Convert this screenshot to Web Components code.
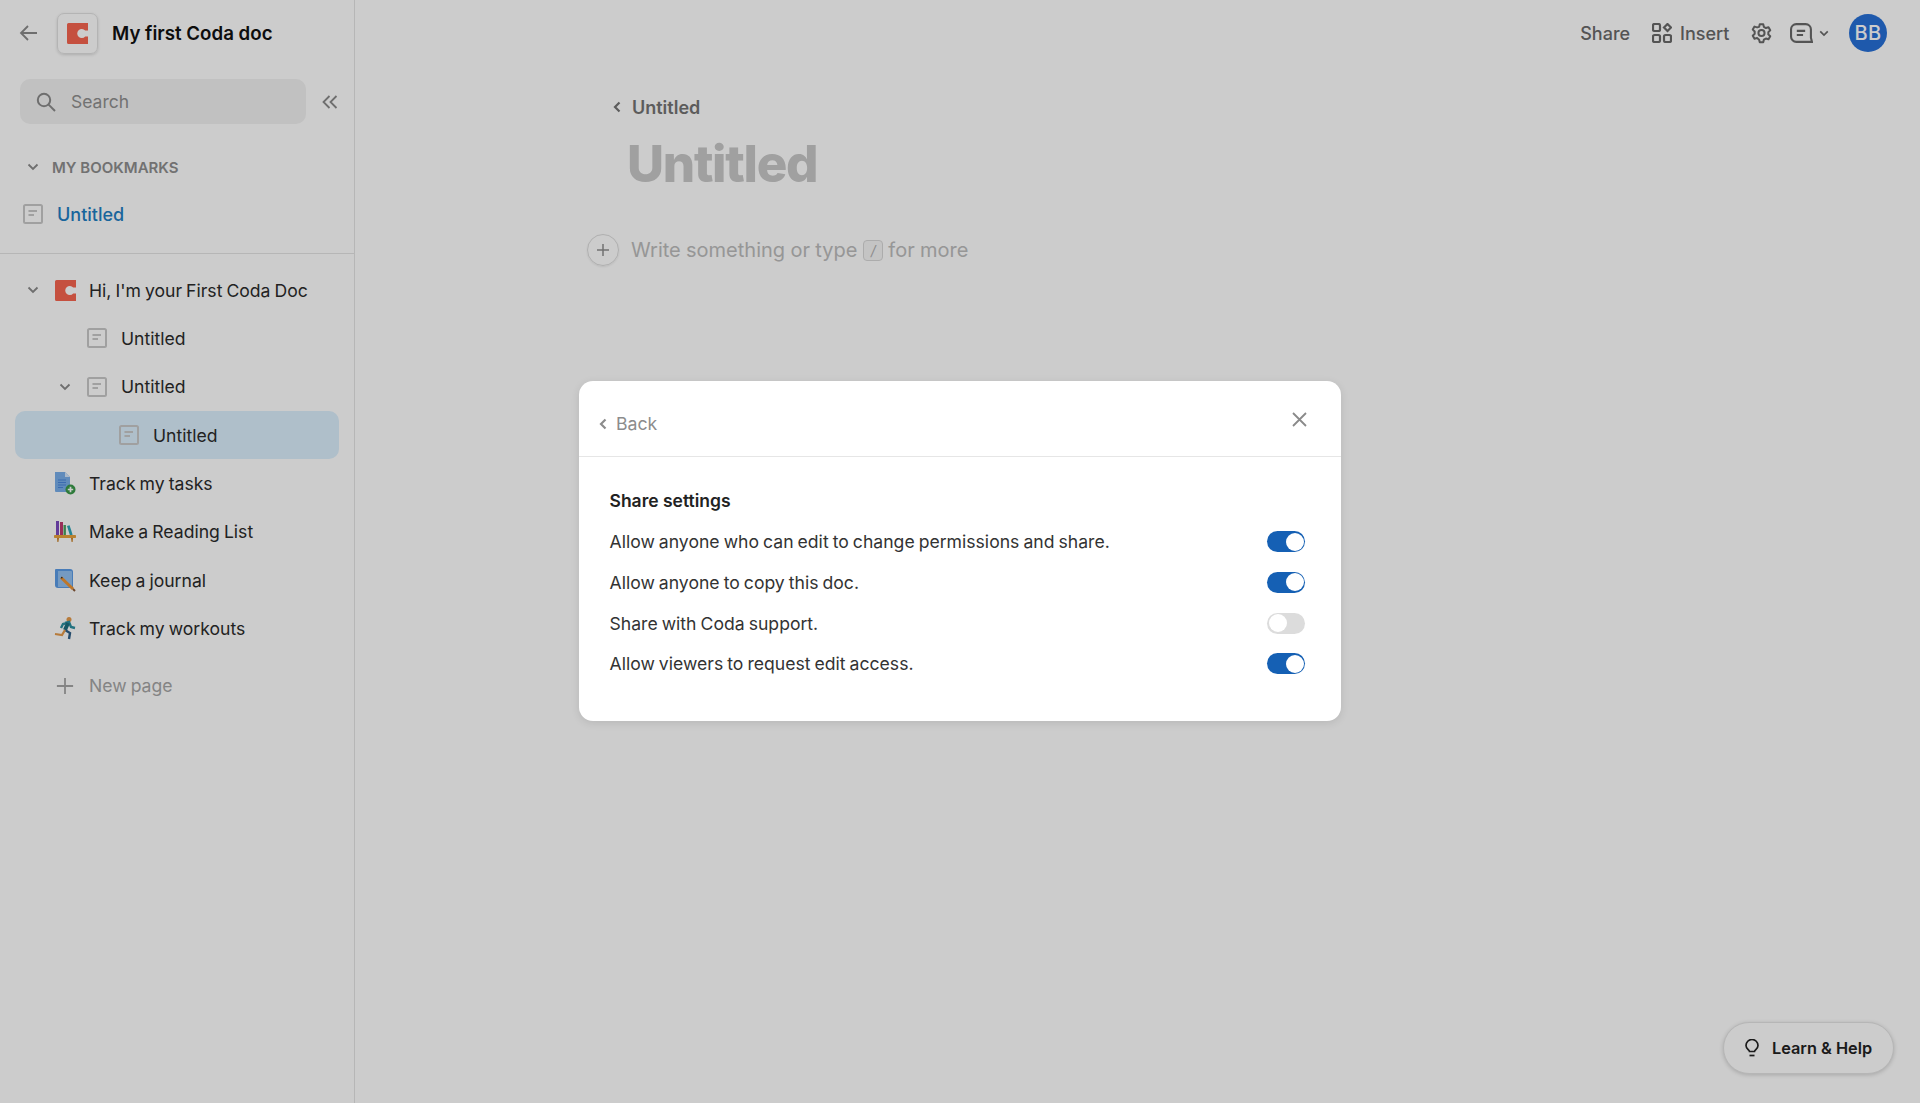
<!DOCTYPE html>
<html lang="en">
<head>
<meta charset="utf-8">
<title>My first Coda doc</title>
<style>
    html, body { margin: 0; height: 100%; }
    body { font-family: Inter, "Liberation Sans", sans-serif; color: #111; background: #fff; overflow: hidden; }
</style>
</head>
<body>
<coda-app>
    <doc-sidebar slot="sidebar" title-text="My first Coda doc">
        <side-heading slot="bookmarks">My bookmarks</side-heading>
        <tree-row slot="bookmarks" flat accent><doc-icon slot="icon" name="page"></doc-icon>Untitled</tree-row>
        <tree-row slot="tree" chevron><doc-icon slot="icon" name="coda" size="21"></doc-icon>Hi, I'm your First Coda Doc</tree-row>
        <tree-row slot="tree" level="1"><doc-icon slot="icon" name="page"></doc-icon>Untitled</tree-row>
        <tree-row slot="tree" level="1" chevron><doc-icon slot="icon" name="page"></doc-icon>Untitled</tree-row>
        <tree-row slot="tree" level="2" selected><doc-icon slot="icon" name="page"></doc-icon>Untitled</tree-row>
        <tree-row slot="tree"><doc-icon slot="icon" name="tasks" size="24"></doc-icon>Track my tasks</tree-row>
        <tree-row slot="tree"><doc-icon slot="icon" name="books" size="24"></doc-icon>Make a Reading List</tree-row>
        <tree-row slot="tree"><doc-icon slot="icon" name="journal" size="24"></doc-icon>Keep a journal</tree-row>
        <tree-row slot="tree"><doc-icon slot="icon" name="runner" size="24"></doc-icon>Track my workouts</tree-row>
        <tree-row slot="tree" muted spaced><doc-icon slot="icon" name="plus" size="18"></doc-icon>New page</tree-row>
    </doc-sidebar>
    <doc-topbar slot="main"></doc-topbar>
    <doc-page slot="main" crumb="Untitled" heading="Untitled"></doc-page>
    <help-button slot="float">Learn &amp; Help</help-button>
    <share-modal slot="modal" heading="Share settings">
        <setting-row on>Allow anyone who can edit to change permissions and share.</setting-row>
        <setting-row on>Allow anyone to copy this doc.</setting-row>
        <setting-row>Share with Coda support.</setting-row>
        <setting-row on>Allow viewers to request edit access.</setting-row>
    </share-modal>
</coda-app>

<script>
const CODA_PATH = 'M1.500 0H20v7.200h-2.700a4.300 4.300 0 1 0 0 5.600H20V20H1.500A1.500 1.500 0 0 1 0 18.500v-17A1.500 1.500 0 0 1 1.500 0z';
const ICONS = {
    page: `<rect x="1" y="1" width="18" height="18" rx="1.500" fill="none" stroke="#c8c8c8" stroke-width="2"/><path d="M5.500 7h8.500M5.500 11h5.500" stroke="#c8c8c8" stroke-width="1.800" fill="none"/>`,
    coda: `<path fill="#f7654f" d="${CODA_PATH}"/>`,
    plus: `<path d="M10 1v18M1 10h18" stroke="#a6a6a6" stroke-width="2" fill="none"/>`,
    tasks: `<path fill="#78aeea" d="M2 1h10l5 5v15H3a1 1 0 0 1-1-1z"/><path fill="#d6e7fa" d="M12 1l5 5h-5z"/><path d="M5 9h8M5 11.500h8M5 14h8M5 16.500h5" stroke="#4a86dc" stroke-width="1"/><circle cx="17.500" cy="18.500" r="5" fill="#3a9a4a"/><path d="M17.500 15.800v5.400M14.800 18.500h5.400" stroke="#fff" stroke-width="1.700"/>`,
    books: `<rect x="3" y="1" width="3" height="14" fill="#7b4ac0"/><rect x="7" y="2" width="3" height="13" fill="#c03a70"/><rect x="10.500" y="5" width="2.400" height="10" fill="#4aa060"/><path d="M14 6l2.600-.8 3 9.600-2.600.8z" fill="#2ea6b8"/><rect x="1" y="15" width="22" height="3" rx=".7" fill="#e8a23c"/><path d="M4 18h2l-.6 4H4.400zM18 18h2l-.4 4h-1z" fill="#c97f24"/>`,
    journal: `<path fill="#5b9ce6" d="M3 1h14a3 3 0 0 1 3 3v16H5a3 3 0 0 1-3-3V2a1 1 0 0 1 1-1z"/><path fill="#93c1f2" d="M5 3h13a1 1 0 0 1 1 1v15H5z"/><path d="M8 9.500l12 11.500" stroke="#ee9432" stroke-width="3"/><path d="M8 9.500l1.500.4" stroke="#333" stroke-width="1.500"/><path d="M20 21l2 2" stroke="#8a5a3a" stroke-width="2"/>`,
    runner: `<circle cx="16" cy="3.500" r="2.500" fill="#e59a4a"/><path d="M12 7l4-1 2 5 4 1M14 7l-4 1-2 4" stroke="#2c8fa0" stroke-width="2.400" fill="none"/><path d="M15 7l-3 7" stroke="#1c6f80" stroke-width="4"/><path d="M12 14l5 3-1 6" stroke="#2f5f88" stroke-width="2.400" fill="none"/><path d="M12 14l-3 5-7-1" stroke="#e59a4a" stroke-width="2.200" fill="none"/>`,
};

customElements.define('doc-icon', class DocIcon extends HTMLElement {
    connectedCallback() {
        const name = this.getAttribute('name');
        const size = this.getAttribute('size') || 20;
        const box = name === 'page' || name === 'coda' || name === 'plus' ? '0 0 20 20' : '0 0 24 24';
        this.attachShadow({ mode: 'open' }).innerHTML = `
            <style>:host { display: inline-flex; } svg { display: block; overflow: visible; }</style>
            <svg width="${size}" height="${size}" viewBox="${box}">${ICONS[name]}</svg>`;
    }
});

customElements.define('coda-app', class CodaApp extends HTMLElement {
    constructor() {
        super();
        this.attachShadow({ mode: 'open' }).innerHTML = `
            <style>
                :host { display: grid; grid-template-columns: 355px 1fr; height: 100vh; position: relative; overflow: hidden; }
                main { min-width: 0; display: flex; flex-direction: column; }
                .float { position: absolute; right: 26px; bottom: 29px; }
                .overlay { position: absolute; inset: 0; background: rgba(0, 0, 0, 0.2); display: flex; align-items: center; justify-content: center; padding-bottom: 1px; }
            </style>
            <slot name="sidebar"></slot>
            <main><slot name="main"></slot></main>
            <div class="float"><slot name="float"></slot></div>
            <div class="overlay"><slot name="modal"></slot></div>`;
    }
});

customElements.define('doc-sidebar', class DocSidebar extends HTMLElement {
    constructor() {
        super();
        this.attachShadow({ mode: 'open' }).innerHTML = `
            <style>
                :host { display: flex; flex-direction: column; border-right: 1px solid #e4e4e4; min-width: 0; }
                header { height: 66px; display: flex; align-items: center; padding-left: 19px; }
                .back { width: 20px; height: 20px; margin-right: 18px; }
                .logo { width: 41px; height: 41px; box-sizing: border-box; border: 1px solid #e2e2e2; border-radius: 7px; box-shadow: 0 1px 3px rgba(0,0,0,.15); display: flex; align-items: center; justify-content: center; margin-right: 14px; }
                h1 { margin: 1px 0 0; font-size: 18.700px; font-weight: 600; line-height: 24px; color: #111; }
                .search-row { display: flex; align-items: center; padding: 13px 0 0 20px; }
                .search { width: 286px; height: 45px; box-sizing: border-box; background: #f2f2f2; border-radius: 10px; display: flex; align-items: center; padding-left: 16px; font-size: 17.500px; color: #8f8f8f; }
                .search svg { margin-right: 15px; }
                .collapse { margin-left: 16px; }
                .bookmarks { padding: 22px 15px 15px; border-bottom: 1px solid #e4e4e4; }
                .tree { padding: 12px 15px 0; display: flex; flex-direction: column; }
                slot { display: block; }
            </style>
            <header>
                <svg class="back" viewBox="0 0 20 20" fill="none" stroke="#8a8a8a" stroke-width="1.800"><path d="M18 10H2M9 3l-7 7 7 7"/></svg>
                <div class="logo"><svg width="21" height="21" viewBox="0 0 20 20"><path fill="#f7654f" d="${CODA_PATH}"/></svg></div>
                <h1 id="t"></h1>
            </header>
            <div class="search-row">
                <div class="search">
                    <svg width="20" height="20" viewBox="0 0 20 20" fill="none" stroke="#8a8a8a" stroke-width="2"><circle cx="8" cy="8" r="6.200"/><path d="M12.600 12.600L19 19"/></svg>
                    <span>Search</span>
                </div>
                <svg class="collapse" width="16" height="14" viewBox="0 0 16 14" fill="none" stroke="#8a8a8a" stroke-width="1.800"><path d="M7.500 1L1.500 7l6 6M14.500 1l-6 6 6 6"/></svg>
            </div>
            <div class="bookmarks"><slot name="bookmarks"></slot></div>
            <div class="tree"><slot name="tree"></slot></div>`;
    }
    connectedCallback() {
        this.shadowRoot.getElementById('t').textContent = this.getAttribute('title-text');
    }
});

customElements.define('side-heading', class SideHeading extends HTMLElement {
    constructor() {
        super();
        this.attachShadow({ mode: 'open' }).innerHTML = `
            <style>
                :host { display: flex; align-items: center; height: 42px; padding-left: 12px; margin-bottom: 2px; font-size: 15px; font-weight: 600; color: #8e8e8e; text-transform: uppercase; }
                svg { margin-right: 13px; }
            </style>
            <svg width="12" height="8" viewBox="0 0 12 8" fill="none" stroke="#8a8a8a" stroke-width="1.800"><path d="M1.500 1.500L6 6l4.500-4.500"/></svg>
            <slot></slot>`;
    }
});

customElements.define('tree-row', class TreeRow extends HTMLElement {
    static #style = `
        :host { display: flex; align-items: center; height: 48.330px; border-radius: 10px; font-size: 17.600px; word-spacing: -0.900px; color: #2b2b2b; box-sizing: border-box; padding-left: calc(10px + 32px * var(--level, 0)); }
        :host([selected]) { background: #dbeffd; }
        :host([muted]) { color: #a6a6a6; }
        :host([spaced]) { margin-top: 9px; }
        :host([flat]) { padding-left: 8px; gap: 14px; }
        :host([accent]) { color: #1f7fc4; font-size: 18px; font-weight: 500; height: 48px; }
        .chev { width: 16px; display: flex; justify-content: center; margin-right: 12px; }
        :host([flat]) .chev { display: none; }
        .icon { width: 24px; display: flex; justify-content: center; margin-right: 12px; }
        :host([flat]) .icon { width: 20px; margin-right: 0; }
        .chev svg { visibility: hidden; }
        :host([chevron]) .chev svg { visibility: visible; }
    `
    constructor() {
        super();
        this.attachShadow({ mode: 'open' }).innerHTML = `
            <style>${TreeRow.#style}</style>
            <span class="chev"><svg width="12" height="8" viewBox="0 0 12 8" fill="none" stroke="#8a8a8a" stroke-width="1.800"><path d="M1.500 1.500L6 6l4.500-4.500"/></svg></span>
            <span class="icon"><slot name="icon"></slot></span>
            <slot></slot>`;
    }
    connectedCallback() {
        this.style.setProperty('--level', this.getAttribute('level') || 0);
    }
});

customElements.define('doc-topbar', class DocTopbar extends HTMLElement {
    constructor() {
        super();
        this.attachShadow({ mode: 'open' }).innerHTML = `
            <style>
                :host { display: flex; justify-content: flex-end; align-items: center; height: 66px; padding-right: 33px; flex: none; font-size: 18px; font-weight: 500; color: #6a6a6a; }
                .share { margin-right: 22px; }
                .insert { display: flex; align-items: center; gap: 8px; margin-right: 21px; }
                .gear { margin-right: 18px; }
                .chev { margin: 0 20px 0 6.500px; }
                .avatar { width: 38px; height: 38px; border-radius: 50%; background: #2670d8; color: #fff; display: flex; align-items: center; justify-content: center; font-size: 20px; font-weight: 500; letter-spacing: .3px; }
            </style>
            <span class="share">Share</span>
            <span class="insert">
                <svg width="20" height="20" viewBox="0 0 20 20" fill="none" stroke="#6a6a6a" stroke-width="2.200"><rect x="1" y="1" width="7" height="7" rx="1.500"/><rect x="1" y="12" width="7" height="7" rx="1.500"/><rect x="12" y="12" width="7" height="7" rx="1.500"/><path d="M15.500 1l3.500 3.500-3.500 3.500-3.500-3.500z"/></svg>
                Insert
            </span>
            <svg class="gear" width="21" height="22" viewBox="0 0 24 24" fill="none" stroke="#6a6a6a" stroke-width="2.300" stroke-linejoin="round"><circle cx="12" cy="12" r="3.500"/><path d="M10 2h4l.7 3 2.300 1.300 3-.9 2 3.400-2.200 2.200v2.600l2.200 2.200-2 3.400-3-.9-2.300 1.300-.7 3h-4l-.7-3L7 17.600l-3 .9-2-3.400 2.200-2.200v-2.600L2 8.100l2-3.400 3 .9L9.300 5z"/></svg>
            <svg width="23" height="21" viewBox="0 0 22 20" fill="none" stroke="#6a6a6a" stroke-width="2"><path d="M6 1h9a5 5 0 0 1 5 5v8l1 4h-15a5 5 0 0 1-5-5V6a5 5 0 0 1 5-5z"/><path d="M6.500 7.500h8M6.500 11.500h6"/></svg>
            <svg class="chev" width="10" height="7" viewBox="0 0 12 8" fill="none" stroke="#6a6a6a" stroke-width="2"><path d="M1.500 1.500L6 6l4.500-4.500"/></svg>
            <span class="avatar">BB</span>`;
    }
});

customElements.define('doc-page', class DocPage extends HTMLElement {
    constructor() {
        super();
        this.attachShadow({ mode: 'open' }).innerHTML = `
            <style>
                :host { display: flex; flex-direction: column; align-items: flex-start; padding: 29px 0 0 232px; }
                .crumb { display: flex; align-items: center; height: 24px; margin-left: 26px; font-size: 18px; font-weight: 600; color: #747474; gap: 11px; }
                h2 { margin: 14px 0 0 40px; font-size: 51px; line-height: 62px; font-weight: 800; letter-spacing: -1.300px; color: #c8c8c8; }
                .write { display: flex; align-items: center; margin-top: 39px; font-size: 20px; word-spacing: -0.300px; color: #bcbcbc; }
                .add { width: 32px; height: 32px; box-sizing: border-box; border: 1px solid #dcdcdc; border-radius: 50%; display: flex; align-items: center; justify-content: center; margin-right: 12px; box-shadow: 0 1px 2px rgba(0,0,0,.08); }
                kbd { display: inline-flex; justify-content: center; align-items: center; width: 20px; height: 21px; box-sizing: border-box; border: 1px solid #d8d8d8; border-radius: 4px; background: #f6f6f6; margin: 0 5px 0 6px; font: italic 14px Inter, sans-serif; color: #b0b0b0; }
            </style>
            <div class="crumb">
                <svg width="8" height="12" viewBox="0 0 8 12" fill="none" stroke="#747474" stroke-width="2.200"><path d="M6.500 1.500L2 6l4.500 4.500"/></svg>
                <span id="c"></span>
            </div>
            <h2 id="h"></h2>
            <div class="write">
                <span class="add"><svg width="14" height="14" viewBox="0 0 14 14" stroke="#8e8e8e" stroke-width="1.500"><path d="M7 1v12M1 7h12"/></svg></span>
                Write something or type <kbd>/</kbd> for more
            </div>`;
    }
    connectedCallback() {
        this.shadowRoot.getElementById('c').textContent = this.getAttribute('crumb');
        this.shadowRoot.getElementById('h').textContent = this.getAttribute('heading');
    }
});

customElements.define('help-button', class HelpButton extends HTMLElement {
    constructor() {
        super();
        this.attachShadow({ mode: 'open' }).innerHTML = `
            <style>
                :host { display: flex; align-items: center; width: 171px; height: 52px; box-sizing: border-box; padding-left: 21px; gap: 13px; background: #fff; border: 1px solid #e4e4e4; border-radius: 26px; box-shadow: 0 1px 4px rgba(0,0,0,.18); font-size: 16.300px; font-weight: 600; color: #222; }
            </style>
            <svg width="14" height="18" viewBox="0 0 14 18" fill="none" stroke="#222" stroke-width="1.700"><path d="M4.500 12.500C4.300 10.800 1 9.800 1 6.500a6 6 0 0 1 12 0c0 3.300-3.300 4.300-3.500 6z"/><path d="M4.500 16.500h5"/></svg>
            <slot></slot>`;
    }
});

customElements.define('share-modal', class ShareModal extends HTMLElement {
    constructor() {
        super();
        this.attachShadow({ mode: 'open' }).innerHTML = `
            <style>
                :host { display: block; width: 762px; height: 340px; box-sizing: border-box; background: #fff; border-radius: 14px; box-shadow: 0 2px 8px rgba(0,0,0,.1); }
                header { border-bottom: 1px solid #e6e6e6; position: relative; display: flex; align-items: flex-start; padding: 31px 0 0 20px; gap: 9px; font-size: 17.700px; line-height: 24px; color: #8c8c8c; height: 44px; }
                header .chev { margin-top: 6px; }
                .close { position: absolute; right: 34px; top: 31px; }
                .body { padding: 24px 36px 0 30.500px; }
                h3 { margin: 0 0 1.600px; height: 39px; display: flex; align-items: center; font-size: 17.500px; font-weight: 600; color: #222; }
            </style>
            <header>
                <svg class="chev" width="8" height="12" viewBox="0 0 8 12" fill="none" stroke="#8c8c8c" stroke-width="2.200"><path d="M6.500 1.500L2 6l4.500 4.500"/></svg>
                <span>Back</span>
                <svg class="close" width="15" height="15" viewBox="0 0 15 15" fill="none" stroke="#8a8a8a" stroke-width="1.800"><path d="M1 1l13 13M14 1L1 14"/></svg>
            </header>
            <div class="body">
                <h3 id="h"></h3>
                <slot></slot>
            </div>`;
    }
    connectedCallback() {
        this.shadowRoot.getElementById('h').textContent = this.getAttribute('heading');
    }
});

customElements.define('setting-row', class SettingRow extends HTMLElement {
    constructor() {
        super();
        this.attachShadow({ mode: 'open' }).innerHTML = `
            <style>
                :host { display: flex; align-items: center; justify-content: space-between; height: 40.600px; font-size: 17.600px; word-spacing: -0.900px; color: #333; }
                .toggle { width: 38px; height: 21px; border-radius: 11px; background: #dcdcdc; position: relative; flex: none; }
                .toggle::after { content: ""; position: absolute; top: 1.500px; left: 1.500px; width: 18px; height: 18px; border-radius: 50%; background: #fff; }
                :host([on]) .toggle { background: #1560b4; }
                :host([on]) .toggle::after { left: 18.500px; }
            </style>
            <slot></slot>
            <span class="toggle"></span>`;
    }
});
</script>
</body>
</html>
